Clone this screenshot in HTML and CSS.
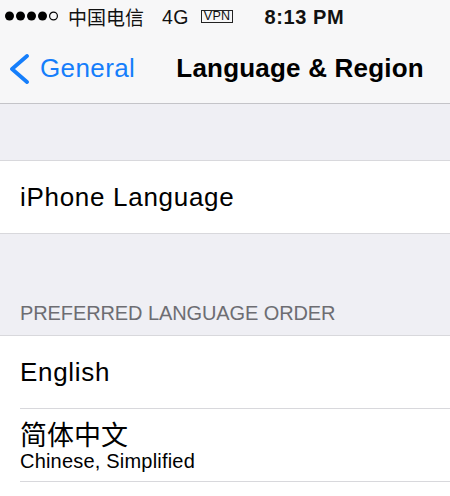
FILE: index.html
```html
<!DOCTYPE html>
<html lang="zh-CN">
<head>
<meta charset="utf-8">
<title>Language &amp; Region</title>
<link rel="stylesheet" href="styles.css">
</head>
<body>
<div class="screen">
  <header class="bars">
    <div class="status">
      <svg class="signal" width="56" height="12" viewBox="0 0 56 12" aria-hidden="true">
        <circle cx="4.5" cy="6" r="4.5" fill="#000"/>
        <circle cx="15.5" cy="6" r="4.5" fill="#000"/>
        <circle cx="26.5" cy="6" r="4.5" fill="#000"/>
        <circle cx="37.5" cy="6" r="4.5" fill="#000"/>
        <circle cx="48.5" cy="6" r="3.9" fill="none" stroke="#000" stroke-width="1.2"/>
      </svg>
      <span class="carrier">中国电信</span>
      <span class="net">4G</span>
      <span class="vpn">VPN</span>
      <span class="time">8:13 PM</span>
    </div>
    <nav class="nav">
      <a class="back">
        <svg class="chev" width="22" height="30" viewBox="0 0 22 30" aria-hidden="true">
          <polyline points="19,2 4,15 19,28" fill="none" stroke="#157efb" stroke-width="3.8" stroke-linecap="round" stroke-linejoin="round"/>
        </svg>
        <span class="back-label">General</span>
      </a>
      <h1 class="title">Language &amp; Region</h1>
    </nav>
  </header>

  <div class="gap-top"></div>
  <section class="group">
    <div class="cell"><span class="cell-text">iPhone Language</span></div>
  </section>

  <div class="section-head"><span>PREFERRED LANGUAGE ORDER</span></div>
  <section class="group open">
    <div class="cell sep"><span class="cell-text">English</span></div>
    <div class="cell sep double">
      <span class="zh">简体中文</span>
      <span class="sub">Chinese, Simplified</span>
    </div>
    <div class="cell"></div>
  </section>
</div>
</body>
</html>
```

FILE: styles.css
```css
html, body {
  margin: 0;
  padding: 0;
}
body {
  background: #efeff4;
  font-family: "Liberation Sans", Arial, "Noto Sans CJK SC", sans-serif;
  color: #000;
  width: 450px;
  height: 496px;
  overflow: hidden;
}
.screen {
  width: 450px;
  height: 496px;
  display: flex;
  flex-direction: column;
  overflow: hidden;
}
.bars {
  background: #f7f7f8;
  border-bottom: 1px solid #c4c4c8;
  flex: 0 0 auto;
}
.status {
  height: 34px;
  display: flex;
  align-items: center;
  padding-left: 5px;
  font-size: 19px;
  color: #111;
}
.signal {
  display: block;
  margin-top: -2px;
}
.carrier {
  font-family: "Noto Sans CJK SC", sans-serif;
  font-size: 19px;
  line-height: 22px;
  margin-left: 7px;
}
.net {
  margin-left: 18px;
  font-size: 19.5px;
  letter-spacing: 0.4px;
}
.vpn {
  margin-left: 12px;
  border: 1px solid #222;
  font-size: 12.5px;
  line-height: 11px;
  padding: 0 2px;
  letter-spacing: 0.3px;
  margin-top: -2px;
}
.time {
  margin-left: 31px;
  font-weight: bold;
  font-size: 20px;
  letter-spacing: 0.6px;
}
.nav {
  height: 69px;
  display: flex;
  align-items: center;
  padding-left: 8px;
}
.back {
  display: flex;
  align-items: center;
  color: #157efb;
}
.chev {
  display: block;
}
.back-label {
  margin-left: 10px;
  font-size: 26px;
  line-height: 29px;
  letter-spacing: 0.4px;
}
.title {
  margin: 0 0 0 41px;
  font-size: 26px;
  line-height: 29px;
  font-weight: bold;
  letter-spacing: 0.2px;
}
.gap-top {
  height: 56px;
  flex: 0 0 auto;
}
.group {
  background: #fff;
  border-top: 1px solid #d8d8dc;
  border-bottom: 1px solid #d8d8dc;
  flex: 0 0 auto;
}
.group.open {
  border-bottom: none;
  flex: 1 1 auto;
}
.cell {
  height: 72px;
  display: flex;
  align-items: center;
  padding-left: 20px;
}
.cell.sep {
  border-bottom: 1px solid #d8d8dc;
  margin-left: 20px;
  padding-left: 0;
}
.cell-text {
  font-size: 26px;
  line-height: 29px;
  letter-spacing: 0.7px;
}
.section-head {
  height: 101px;
  display: flex;
  align-items: flex-end;
  padding: 0 0 10px 20px;
  box-sizing: border-box;
  color: #6d6d72;
  font-size: 20px;
  line-height: 23px;
  letter-spacing: -0.1px;
  flex: 0 0 auto;
}
.cell.double {
  flex-direction: column;
  align-items: flex-start;
  justify-content: center;
}
.zh {
  font-family: "Noto Sans CJK SC", sans-serif;
  font-size: 27px;
  line-height: 32px;
}
.sub {
  font-size: 20px;
  line-height: 23px;
  letter-spacing: 0.2px;
}
```
